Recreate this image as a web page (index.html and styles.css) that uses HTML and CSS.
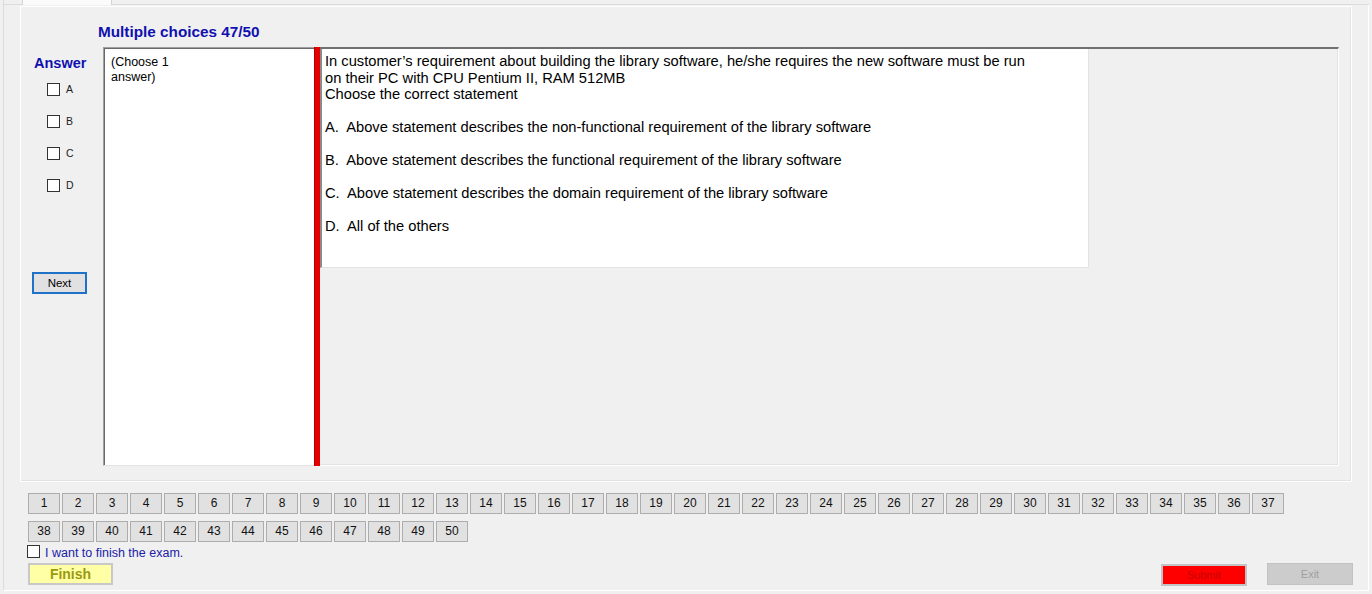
FILE: index.html
```html
<!DOCTYPE html>
<html>
<head>
<meta charset="utf-8">
<link rel="stylesheet" href="styles.css">
</head>
<body>
<div class="tabstrip"><div class="tabpad"></div><div class="tab"></div><div class="tabrest"></div></div>
<div class="page">
  <div class="group">
    <div class="title">Multiple choices 47/50</div>
    <div class="main">
      <div class="answers">
        <div class="answer-label">Answer</div>
        <div class="opt"><span class="cb"></span><span class="optl">A</span></div>
        <div class="opt"><span class="cb"></span><span class="optl">B</span></div>
        <div class="opt"><span class="cb"></span><span class="optl">C</span></div>
        <div class="opt"><span class="cb"></span><span class="optl">D</span></div>
        <div class="next">Next</div>
      </div>
      <div class="choose">(Choose 1<br>answer)</div>
      <div class="redbar"></div>
      <div class="qarea">
        <div class="qbox">
          <div class="qline">In customer’s requirement about building the library software, he/she requires the new software must be run</div>
          <div class="qline">on their PC with CPU Pentium II, RAM 512MB</div>
          <div class="qline">Choose the correct statement</div>
          <div class="qline blank"></div>
          <div class="qline">A.&nbsp; Above statement describes the non-functional requirement of the library software</div>
          <div class="qline blank"></div>
          <div class="qline">B.&nbsp; Above statement describes the functional requirement of the library software</div>
          <div class="qline blank"></div>
          <div class="qline">C.&nbsp; Above statement describes the domain requirement of the library software</div>
          <div class="qline blank"></div>
          <div class="qline">D.&nbsp; All of the others</div>
        </div>
      </div>
    </div>
  </div>
  <div class="nums">
    <div class="numrow">
      <span class="nb">1</span><span class="nb">2</span><span class="nb">3</span><span class="nb">4</span><span class="nb">5</span><span class="nb">6</span><span class="nb">7</span><span class="nb">8</span><span class="nb">9</span><span class="nb">10</span><span class="nb">11</span><span class="nb">12</span><span class="nb">13</span><span class="nb">14</span><span class="nb">15</span><span class="nb">16</span><span class="nb">17</span><span class="nb">18</span><span class="nb">19</span><span class="nb">20</span><span class="nb">21</span><span class="nb">22</span><span class="nb">23</span><span class="nb">24</span><span class="nb">25</span><span class="nb">26</span><span class="nb">27</span><span class="nb">28</span><span class="nb">29</span><span class="nb">30</span><span class="nb">31</span><span class="nb">32</span><span class="nb">33</span><span class="nb">34</span><span class="nb">35</span><span class="nb">36</span><span class="nb">37</span>
    </div>
    <div class="numrow">
      <span class="nb">38</span><span class="nb">39</span><span class="nb">40</span><span class="nb">41</span><span class="nb">42</span><span class="nb">43</span><span class="nb">44</span><span class="nb">45</span><span class="nb">46</span><span class="nb">47</span><span class="nb">48</span><span class="nb">49</span><span class="nb">50</span>
    </div>
  </div>
  <div class="finishline"><span class="cb"></span><span class="finishtext">I want to finish the exam.</span></div>
  <div class="footer">
    <div class="finish">Finish</div>
    <div class="spacer"></div>
    <div class="submit">Submit</div>
    <div class="exit">Exit</div>
  </div>
</div>
</body>
</html>
```
FILE: styles.css
```css
* { box-sizing: border-box; }
html, body {
  margin: 0;
  padding: 0;
  width: 1372px;
  height: 594px;
  overflow: hidden;
  background: #f0f0f0;
  font-family: "Liberation Sans", Arial, sans-serif;
  color: #000;
}
.tabstrip {
  display: flex;
  height: 5px;
  margin-left: 3px;
}
.tabpad {
  width: 19px;
  border-left: 1px solid #dcdcdc;
  border-bottom: 1px solid #dcdcdc;
}
.tab {
  width: 90px;
  background: #fbfbfb;
  border-left: 1px solid #d4d4d4;
  border-right: 1px solid #d4d4d4;
}
.tabrest {
  flex: 1;
  border-bottom: 1px solid #dcdcdc;
  margin-right: 3px;
}
.page {
  margin-left: 3px;
  width: 1366px;
  height: 586px;
  border-left: 1px solid #dcdcdc;
  border-right: 1px solid #ffffff;
  border-bottom: 1px solid #ffffff;
  display: flex;
  flex-direction: column;
}
.group {
  margin-left: 16px;
  margin-top: 1px;
  width: 1332px;
  height: 476px;
  border: 1px solid #ffffff;
  box-shadow: inset -1px -1px 0 #e2e2e2;
  display: flex;
  flex-direction: column;
}
.title {
  margin-top: 17px;
  padding-left: 77px;
  height: 16px;
  line-height: 16px;
  font-size: 15.3px;
  font-weight: bold;
  color: #1010b0;
}
.main {
  margin-top: 7px;
  height: 419px;
  display: flex;
  margin-right: 12px;
}
.answers {
  width: 82px;
  display: flex;
  flex-direction: column;
}
.answer-label {
  margin-top: 8px;
  padding-left: 13px;
  height: 16px;
  line-height: 16px;
  font-size: 14.5px;
  font-weight: bold;
  color: #1010b0;
}
.opt {
  display: flex;
  align-items: center;
  height: 13px;
  margin-left: 26px;
  margin-bottom: 19px;
}
.answer-label + .opt { margin-top: 12px; }
.cb {
  display: inline-block;
  width: 13px;
  height: 13px;
  border: 1px solid #333333;
  background: #ffffff;
  flex: none;
}
.optl {
  margin-left: 6px;
  font-size: 10.5px;
  color: #222;
  line-height: 13px;
}
.next {
  margin-top: 61px;
  margin-left: 11px;
  width: 55px;
  height: 22px;
  border: 2px solid #1e73c8;
  background: #e1e1e1;
  font-size: 11.5px;
  line-height: 18px;
  text-align: center;
  color: #000;
}
.choose {
  width: 211px;
  height: 419px;
  background: #ffffff;
  border-left: 1px solid #a0a0a0;
  border-top: 1px solid #a0a0a0;
  border-bottom: 1px solid #e3e3e3;
  box-shadow: inset 1px 1px 0 #696969;
  padding: 7px 0 0 7px;
  font-size: 12.5px;
  line-height: 15px;
  color: #000;
}
.redbar {
  width: 6px;
  height: 419px;
  background: #e40000;
  border-left: 1px solid #b00000;
}
.qarea {
  flex: 1;
  height: 419px;
  border-top: 2px solid #707070;
  border-right: 1px solid #ffffff;
  border-bottom: 1px solid #ffffff;
  box-shadow: inset -1px -1px 0 #e3e3e3;
}
.qbox {
  width: 769px;
  height: 219px;
  background: #ffffff;
  border-left: 2px solid #8a8a8a;
  border-right: 1px solid #e3e3e3;
  border-bottom: 1px solid #e3e3e3;
  padding: 4px 0 0 3px;
  font-size: 14.7px;
  line-height: 16.5px;
  color: #000;
}
.qline { height: 16.5px; white-space: nowrap; }
.nums {
  margin-top: 11px;
  padding-left: 24px;
  display: flex;
  flex-direction: column;
  gap: 7px;
}
.numrow {
  display: flex;
  gap: 2px;
}
.nb {
  width: 32px;
  height: 21px;
  background: #e1e1e1;
  border: 1px solid #adadad;
  font-size: 12px;
  line-height: 19px;
  text-align: center;
  color: #111;
}
.finishline {
  margin-top: 3px;
  margin-left: 23px;
  display: flex;
  align-items: center;
  height: 13px;
}
.finishtext {
  margin-left: 5px;
  margin-top: 3px;
  font-size: 12.5px;
  color: #2020a8;
  line-height: 13px;
}
.footer {
  margin-top: 5px;
  display: flex;
  align-items: flex-start;
  padding-left: 24px;
  padding-right: 15px;
}
.finish {
  width: 85px;
  height: 22px;
  background: #ffffa6;
  border: 2px solid #c8c8c8;
  font-size: 14px;
  font-weight: bold;
  color: #9a9a10;
  line-height: 19px;
  text-align: center;
}
.spacer { flex: 1; }
.submit {
  margin-top: 1px;
  width: 86px;
  height: 22px;
  background: #ff0000;
  border: 2px solid #c4c4c4;
  font-size: 11px;
  line-height: 18px;
  text-align: center;
  color: #c80000;
}
.exit {
  margin-left: 20px;
  width: 86px;
  height: 22px;
  background: #cccccc;
  border: 1px solid #c2c2c2;
  font-size: 11px;
  line-height: 20px;
  text-align: center;
  color: #a0a0a0;
}
```
